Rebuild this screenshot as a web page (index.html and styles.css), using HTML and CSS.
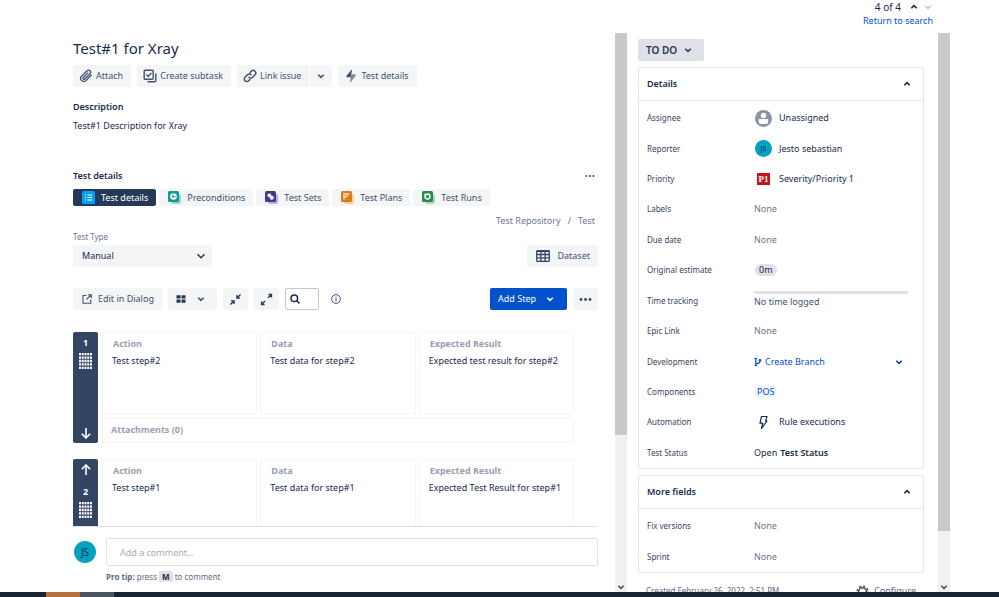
FILE: index.html
```html
<!DOCTYPE html>
<html lang="en">
<head>
  <meta charset="UTF-8">
  <title>Test#1 for Xray</title>
  <meta name="viewport" content="width=device-width, initial-scale=1.0"/>
  <link rel="stylesheet" href="styles.css">
</head>
<body>
  <!-- shared icons -->
  <svg class="sprite" width="0" height="0" aria-hidden="true">
    <symbol id="down" viewBox="0 0 10 10"><path d="M2.300 3.700L5 6.400l2.700-2.700" fill="none" stroke="currentColor" stroke-width="1.600"/></symbol>
    <symbol id="up" viewBox="0 0 10 10"><path d="M2.300 6.300L5 3.600l2.700 2.700" fill="none" stroke="currentColor" stroke-width="1.600"/></symbol>
    <symbol id="grip" viewBox="0 0 13 16">
      <path d="M0 1.200h13M0 4.600h13M0 8h13M0 11.400h13M0 14.800h13" stroke="#fff" stroke-width="2.300" stroke-dasharray="2 .75"/>
    </symbol>
    <symbol id="arrow" viewBox="0 0 12 12"><path d="M6 1v10M1.800 6.800L6 11l4.200-4.200" fill="none" stroke="#fff" stroke-width="1.600"/></symbol>
  </svg>

  <header class="pager">
    <div class="pager-row">
      <span>4 of 4</span>
      <button class="plain" aria-label="Previous"><svg class="ico10"><use href="#up"/></svg></button>
      <button class="plain faded" aria-label="Next" disabled><svg class="ico10"><use href="#down"/></svg></button>
    </div>
    <a href="#">Return to search</a>
  </header>

  <div class="layout">
    <main class="issue">
      <div class="issue-scroll">
        <h1>Test#1 for Xray</h1>
        <div class="actions">
          <button class="btn">
            <svg class="ico14" viewBox="0 0 14 14"><path d="M12.3 6.2L7 11.6a3.1 3.1 0 0 1-4.4-4.4l5.5-5.5a2.1 2.1 0 0 1 3 3L5.900 10a1.050 1.050 0 0 1-1.500-1.500L9 3.900" fill="none" stroke="#42526e" stroke-width="1.300" stroke-linecap="round"/></svg>
            Attach
          </button>
          <button class="btn">
            <svg class="ico14" viewBox="0 0 14 14" fill="none" stroke="#42526e" stroke-width="1.400"><rect x="1.200" y="1.200" width="9" height="9" rx="1"/><path d="M3.400 5.600l1.800 1.800 3.200-3.400M12.800 4.500v7a1.300 1.300 0 0 1-1.300 1.300H4.500"/></svg>
            Create subtask
          </button>
          <div class="split">
            <button class="btn">
              <svg class="ico14" viewBox="0 0 14 14" fill="none" stroke="#42526e" stroke-width="1.500" stroke-linecap="round"><path d="M6 8.200a2.500 2.500 0 0 0 3.600 0l2.400-2.400a2.500 2.500 0 0 0-3.600-3.600L7.200 3.400"/><path d="M8 5.800a2.500 2.500 0 0 0-3.600 0L2 8.200a2.500 2.500 0 0 0 3.600 3.600l1.200-1.200"/></svg>
              Link issue
            </button>
            <button class="btn btn-arrow" aria-label="More link options"><svg class="ico10"><use href="#down"/></svg></button>
          </div>
          <button class="btn">
            <svg class="ico14" viewBox="0 0 14 14"><path d="M8.200 0L2.500 6.800v1.400h4.200L8.200 0z" fill="#42526e"/><path d="M5.800 14l5.700-7V5.200H7.300L5.800 14z" fill="#7a869a"/></svg>
            Test details
          </button>
        </div>

        <h2>Description</h2>
        <p class="description">Test#1 Description for Xray</p>

        <div class="panel-head">
          <h2>Test details</h2>
          <button class="plain" aria-label="More"><svg class="ico10" viewBox="0 0 10 10" fill="#344563"><circle cx="1.500" cy="5" r="1"/><circle cx="5" cy="5" r="1"/><circle cx="8.500" cy="5" r="1"/></svg></button>
        </div>
        <nav class="tabs">
          <button class="tab tab-active">
            <svg class="ico13" viewBox="0 0 13 13"><rect width="13" height="13" rx="1.500" fill="#00a3f5"/><path d="M3 4h1M3 6.500h1M3 9h1M5.500 4h4.500M5.500 6.500h4.500M5.500 9h4.500" stroke="#fff"/></svg>
            Test details
          </button>
          <button class="tab">
            <svg class="ico13" viewBox="0 0 13 13"><rect x="3" y="3" width="10" height="10" rx="2" fill="#8fdbd3"/><rect width="11" height="11" rx="1.500" fill="#129a94"/><circle cx="5.500" cy="5.500" r="3.300" fill="#fff"/><path d="M5 3.200v2.500h2.700M3.700 5l1.500 2" fill="none" stroke="#129a94"/></svg>
            Preconditions
          </button>
          <button class="tab">
            <svg class="ico13" viewBox="0 0 13 13"><rect x="3" y="3" width="10" height="10" rx="2" fill="#b9b0e6"/><rect width="11" height="11" rx="1.500" fill="#48368f"/><circle cx="4.300" cy="4.300" r="1.900" fill="#fff"/><circle cx="6.800" cy="6.800" r="2" fill="#fff"/></svg>
            Test Sets
          </button>
          <button class="tab">
            <svg class="ico13" viewBox="0 0 13 13"><rect x="3" y="3" width="10" height="10" rx="2" fill="#ffcf91"/><rect width="11" height="11" rx="1.500" fill="#d97a1c"/><path d="M3 8.500V3h5.500M3 6l4-1" fill="none" stroke="#ffe3c2" stroke-width="1.300"/></svg>
            Test Plans
          </button>
          <button class="tab">
            <svg class="ico13" viewBox="0 0 13 13"><rect x="3" y="3" width="10" height="10" rx="2" fill="#a5dcb5"/><rect width="11" height="11" rx="1.500" fill="#2b8a4b"/><circle cx="5.500" cy="5.500" r="2.400" fill="none" stroke="#fff" stroke-width="1.500"/><path d="M2 3l2 1" stroke="#fff"/></svg>
            Test Runs
          </button>
        </nav>
        <div class="crumbs"><a href="#">Test Repository</a><span>/</span><a href="#">Test</a></div>

        <label class="type-label" for="test-type">Test Type</label>
        <div class="type-row">
          <div class="select-wrap">
            <select id="test-type"><option>Manual</option></select>
            <svg class="select-arrow" viewBox="0 0 10 10"><path d="M1.500 3.200L5 6.700l3.500-3.500" fill="none" stroke="#253858" stroke-width="1.500"/></svg>
          </div>
          <button class="btn btn-dataset">
            <svg class="ico14" viewBox="0 0 14 14" fill="none" stroke="#344563" stroke-width="1.300"><rect x=".7" y="1.700" width="12.600" height="10.600" rx=".8"/><path d="M.7 2.300h12.600M.7 5.500h12.600M.7 8.900h12.600M4.900 2v10M9.100 2v10"/></svg>
            Dataset
          </button>
        </div>

        <div class="toolbar">
          <button class="btn btn-dialog">
            <svg class="ico10" viewBox="0 0 10 10" fill="none" stroke="#42526e" stroke-width="1.100"><path d="M4.500 1.500H1v7.800h7.800V5.500M6 .7h3.300V4M9 1L4.500 5.500"/></svg>
            Edit in Dialog
          </button>
          <button class="btn btn-view" aria-label="View">
            <svg class="ico10" viewBox="0 0 10 10" fill="#253858"><path d="M.5 1.200h4v3.300h-4zM5.500 1.200h4v3.300h-4zM.5 5.500h4v3.300h-4zM5.500 5.500h4v3.300h-4z"/></svg>
            <svg class="ico10"><use href="#down"/></svg>
          </button>
          <button class="btn btn-square" aria-label="Collapse">
            <svg class="ico13" viewBox="0 0 13 13" fill="none" stroke="#253858" stroke-width="1.300"><path d="M11.500 1.500L8.300 4.700M7.900 2v3.100H11M1.500 11.500l3.200-3.200M2 7.900h3.100V11"/></svg>
          </button>
          <button class="btn btn-square" aria-label="Expand">
            <svg class="ico13" viewBox="0 0 13 13" fill="none" stroke="#253858" stroke-width="1.300"><path d="M8 5l3.300-3.300M8.400 1.500h3.100v3.100M5 8l-3.300 3.300M1.500 8.400v3.100h3.100"/></svg>
          </button>
          <div class="search">
            <svg class="ico10" viewBox="0 0 10 10" fill="none" stroke="#172b4d" stroke-width="1.500"><circle cx="4.300" cy="4.300" r="3.300"/><path d="M6.700 6.700l2.700 2.700"/></svg>
            <input type="text" aria-label="Search steps">
          </div>
          <svg class="ico10 info" viewBox="0 0 10 10" fill="none" stroke="#42526e"><circle cx="5" cy="5" r="4.400"/><path d="M5 4.400v3M5 2.400v1.100"/></svg>
          <button class="btn btn-primary">Add Step <svg class="ico10"><use href="#down"/></svg></button>
          <button class="btn btn-square" aria-label="More step actions">
            <svg class="ico13" viewBox="0 0 13 13" fill="#344563"><circle cx="2" cy="6.500" r="1.400"/><circle cx="6.500" cy="6.500" r="1.400"/><circle cx="11" cy="6.500" r="1.400"/></svg>
          </button>
        </div>

        <section class="step">
          <div class="step-bar">
            <span class="step-num">1</span>
            <svg class="grip"><use href="#grip"/></svg>
            <svg class="ico12 step-down"><use href="#arrow"/></svg>
          </div>
          <div class="step-body">
            <div class="cell"><h3>Action</h3><p>Test step#2</p></div>
            <div class="cell"><h3>Data</h3><p>Test data for step#2</p></div>
            <div class="cell"><h3>Expected Result</h3><p>Expected test result for step#2</p></div>
            <div class="attachments"><h3>Attachments (0)</h3></div>
          </div>
        </section>
        <section class="step">
          <div class="step-bar">
            <svg class="ico12 step-up"><use href="#arrow"/></svg>
            <span class="step-num">2</span>
            <svg class="grip"><use href="#grip"/></svg>
          </div>
          <div class="step-body">
            <div class="cell"><h3>Action</h3><p>Test step#1</p></div>
            <div class="cell"><h3>Data</h3><p>Test data for step#1</p></div>
            <div class="cell"><h3>Expected Result</h3><p>Expected Test Result for step#1</p></div>
            <div class="attachments"><h3>Attachments (0)</h3></div>
          </div>
        </section>
      </div>

      <div class="comment">
        <span class="avatar avatar-lg">JS</span>
        <div class="comment-main">
          <input type="text" placeholder="Add a comment..." aria-label="Add a comment">
          <p class="tip"><b>Pro tip:</b> press <kbd>M</kbd> to comment</p>
        </div>
      </div>
    </main>

    <div class="scrollbar scrollbar-main"><div class="thumb"></div><svg class="ico10"><use href="#down"/></svg></div>

    <aside class="side">
      <button class="status">TO DO <svg class="ico10"><use href="#down"/></svg></button>

      <section class="card">
        <button class="card-head">Details <svg class="ico10"><use href="#up"/></svg></button>
        <dl class="fields fields-details">
          <dt>Assignee</dt>
          <dd>
            <svg class="ico17" viewBox="0 0 17 17"><circle cx="8.500" cy="8.500" r="8.500" fill="#8993a4"/><circle cx="8.500" cy="5.500" r="2.700" fill="#fff"/><path d="M3.800 9h9.400v2.800a2.200 2.200 0 0 1-2.200 2.200H6a2.200 2.200 0 0 1-2.200-2.200z" fill="#fff"/></svg>
            Unassigned
          </dd>
          <dt>Reporter</dt>
          <dd><span class="avatar">JS</span> Jesto sebastian</dd>
          <dt>Priority</dt>
          <dd><span class="priority">P1</span> Severity/Priority 1</dd>
          <dt>Labels</dt>
          <dd class="none">None</dd>
          <dt>Due date</dt>
          <dd class="none">None</dd>
          <dt>Original estimate</dt>
          <dd><span class="estimate">0m</span></dd>
          <dt>Time tracking</dt>
          <dd class="tracking"><div class="track"></div>No time logged</dd>
          <dt>Epic Link</dt>
          <dd class="none">None</dd>
          <dt>Development</dt>
          <dd class="dev">
            <a href="#"><svg class="ico8" viewBox="0 0 8 10" fill="none" stroke="#0052cc" stroke-width="1.200"><path d="M1.800 1.500v7M.5 1.500h2.600M.5 8.500h2.600M1.800 6.700C4 6.700 6 6.300 6 4"/><circle cx="6" cy="3.300" r=".8"/></svg>Create Branch</a>
            <button class="plain" aria-label="Development options"><svg class="ico10"><use href="#down"/></svg></button>
          </dd>
          <dt>Components</dt>
          <dd><a class="tag" href="#">POS</a></dd>
          <dt>Automation</dt>
          <dd>
            <svg class="ico17" viewBox="0 0 17 17"><path d="M6.500 2.500h5.500L10.500 7H12L6.500 14.500l1.200-5.300H5z" fill="none" stroke="#172b4d" stroke-width="1.200" stroke-linejoin="round"/></svg>
            Rule executions
          </dd>
          <dt>Test Status</dt>
          <dd class="test-status">Open <b>Test Status</b></dd>
        </dl>
      </section>

      <section class="card">
        <button class="card-head">More fields <svg class="ico10"><use href="#up"/></svg></button>
        <dl class="fields fields-more">
          <dt>Fix versions</dt>
          <dd class="none">None</dd>
          <dt>Sprint</dt>
          <dd class="none">None</dd>
        </dl>
      </section>

      <footer class="side-foot">
        <span>Created February 26, 2022, 2:51 PM</span>
        <button class="plain configure">
          <svg class="ico13" viewBox="0 0 13 13" fill="none" stroke="#42526e"><circle cx="6.500" cy="6.500" r="3.800" stroke-width="1.500"/><circle cx="6.500" cy="6.500" r="5.300" stroke-width="1.600" stroke-dasharray="2.100 2.060"/></svg>
          Configure
        </button>
      </footer>
    </aside>

    <div class="scrollbar scrollbar-side"><div class="thumb"></div><svg class="ico10"><use href="#down"/></svg></div>
  </div>

  <div class="taskbar"><span class="task task-orange"></span><span class="task task-grey"></span></div>
</body>
</html>
```
FILE: styles.css
```css
* { box-sizing: border-box; }
body {
  margin: 0;
  height: 100vh;
  display: flex;
  flex-direction: column;
  overflow: hidden;
  background: #fff;
  color: #172b4d;
  font-family: 'Segoe UI', 'Noto Sans', 'Open Sans', sans-serif;
  font-size: 9px;
  line-height: 16px;
}
h1, h2, h3, p, dl, dd { margin: 0; }
button, input, select { font: inherit; color: inherit; }
a { color: #0052cc; text-decoration: none; }
a:hover { text-decoration: underline; }
svg { flex: none; }
.sprite { position: absolute; }
.ico8 { width: 8px; height: 10px; }
.ico10 { width: 10px; height: 10px; }
.ico12 { width: 12px; height: 12px; }
.ico13 { width: 13px; height: 13px; }
.ico14 { width: 14px; height: 14px; }
.ico17 { width: 17px; height: 17px; }

/* Pager */
.pager {
  height: 33px;
  padding-right: 66px;
  display: flex;
  flex-direction: column;
  align-items: flex-end;
  line-height: 14px;
}
.pager-row { display: flex; align-items: center; gap: 4px; font-size: 10px; }
.pager-row span { margin-right: 4px; }
.plain {
  display: flex;
  align-items: center;
  border: 0;
  padding: 0;
  background: none;
  cursor: pointer;
}
.faded { color: #c1c7d0; }

.layout {
  flex: 1;
  min-height: 0;
  display: flex;
  padding: 0 49px 0 73px;
}

/* Issue column */
.issue {
  flex: 1;
  min-width: 0;
  display: flex;
  flex-direction: column;
  padding-right: 17px;
}
.issue-scroll {
  flex: 1;
  min-height: 0;
  overflow: hidden;
  padding-top: 4px;
  border-bottom: 1px solid #dfe1e6;
}
h1 { font-size: 15px; line-height: 22px; font-weight: 400; }
h2 { font-size: 9px; line-height: 16px; font-weight: 600; }
.actions { display: flex; gap: 6px; margin: 6px 0 12px; }
.btn {
  display: flex;
  align-items: center;
  gap: 3px;
  height: 22px;
  padding: 0 8px 0 6px;
  border: 0;
  border-radius: 2px;
  background: #f4f5f7;
  color: #42526e;
  white-space: nowrap;
  cursor: pointer;
}
.split { display: flex; gap: 1px; }
.btn-arrow { padding: 0 6px; }
.description { margin-top: 3px; }
.panel-head {
  display: flex;
  justify-content: space-between;
  margin-top: 34px;
  padding-right: 3px;
}

.tabs { display: flex; gap: 3px; margin-top: 5px; }
.tab {
  display: flex;
  align-items: center;
  gap: 6px;
  height: 17px;
  padding: 0 8px 0 9px;
  border: 0;
  border-radius: 2px;
  background: #f4f5f7;
  color: #42526e;
  white-space: nowrap;
}
.tab-active { background: #253858; color: #fff; }
.crumbs {
  display: flex;
  justify-content: flex-end;
  gap: 7px;
  margin-top: 7px;
  padding-right: 3px;
  color: #6b778c;
}
.crumbs a { color: #6b778c; }

.type-label { display: block; font-size: 8px; color: #6b778c; }
.type-row { display: flex; justify-content: space-between; }
.select-wrap { position: relative; width: 139px; }
.select-wrap select {
  appearance: none;
  width: 100%;
  height: 22px;
  padding: 0 9px;
  border: 0;
  border-radius: 2px;
  background: #f4f5f7;
}
.select-arrow {
  position: absolute;
  right: 6px;
  top: 6px;
  width: 10px;
  height: 10px;
  pointer-events: none;
}
.btn-dataset { padding: 0 8px 0 9px; gap: 7px; }

.toolbar { display: flex; gap: 6px; margin: 21px 0 22px; }
.btn-dialog { padding: 0 8px 0 9px; gap: 6px; }
.btn-view { padding: 0 11px 0 8px; gap: 10px; width: 49px; }
.btn-square { width: 25px; padding: 0; justify-content: center; }
.search {
  display: flex;
  align-items: center;
  width: 34px;
  padding-left: 4px;
  border: 1px solid #c1c7d0;
  border-radius: 2px;
}
.search input {
  flex: 1;
  min-width: 0;
  border: 0;
  padding: 0 2px;
  background: none;
  outline: none;
}
.info { margin: 6px auto 0 6px; }
.btn-primary { background: #0052cc; color: #fff; gap: 9px; padding: 0 12px 0 8px; }

/* Test steps */
.step { display: flex; gap: 4px; margin-bottom: 16px; padding-right: 24px; }
.step-bar {
  flex: none;
  width: 25px;
  display: flex;
  flex-direction: column;
  align-items: center;
  padding: 4px 0;
  border-radius: 2px;
  background: #344563;
}
.step-num { color: #fff; font-weight: 700; line-height: 14px; }
.grip { width: 13px; height: 16px; margin-top: 3px; }
.step-down { margin-top: auto; }
.step-up { transform: rotate(180deg); margin: 1px 0 9px; }
.step-body {
  flex: 1;
  display: grid;
  grid-template-columns: repeat(3, minmax(0, 1fr));
  gap: 4px 3px;
}
.cell, .attachments { border: 1px solid #f4f5f7; border-radius: 2px; }
.cell { min-height: 82px; padding: 3px 9px; }
.cell h3 { padding-left: 1px; }
.cell p { margin-top: 1px; white-space: nowrap; }
h3 { font-size: 9px; line-height: 16px; font-weight: 700; color: #97a0af; }
.attachments { grid-column: 1 / -1; padding: 3px 8px 4px; }

/* Comment box */
.comment { display: flex; gap: 10px; padding: 11px 0 7px 1px; }
.avatar {
  flex: none;
  display: flex;
  align-items: center;
  justify-content: center;
  width: 17px;
  height: 17px;
  border-radius: 50%;
  background: #00a3bf;
  color: #172b4d;
  font-size: 7px;
}
.avatar-lg { width: 22px; height: 22px; margin-top: 3px; font-size: 10px; }
.comment-main { flex: 1; }
.comment-main input {
  display: block;
  width: 100%;
  height: 28px;
  padding: 0 13px;
  border: 1px solid #dfe1e6;
  border-radius: 2px;
}
.comment-main input::placeholder { color: #a5adba; opacity: 1; }
.tip { margin-top: 3px; font-size: 8px; color: #5e6c84; }
.tip kbd {
  padding: 0 3px;
  border-radius: 2px;
  background: #dfe1e6;
  color: #172b4d;
  font: inherit;
  font-weight: 700;
}

/* Scrollbars */
.scrollbar {
  flex: none;
  width: 12px;
  display: flex;
  flex-direction: column;
  align-items: center;
  justify-content: space-between;
  background: #f1f1f1;
  color: #505050;
}
.thumb { width: 100%; background: #c9c9c9; }
.scrollbar-main .thumb { height: 72%; }
.scrollbar-side .thumb { height: 89%; }

/* Side panel */
.side {
  flex: none;
  width: 311px;
  padding: 6px 14px 0 11px;
  overflow: hidden;
}
.status {
  display: flex;
  align-items: center;
  gap: 6px;
  height: 22px;
  padding: 0 11px 0 8px;
  border: 0;
  border-radius: 2px;
  background: #dfe1e6;
  color: #253858;
  font-size: 10px;
  font-weight: 600;
}
.card { margin-top: 6px; border: 1px solid #e3e5e9; border-radius: 3px; }
.card-head {
  display: flex;
  align-items: center;
  justify-content: space-between;
  width: 100%;
  height: 33px;
  padding: 0 11px 0 8px;
  border: 0;
  border-bottom: 1px solid #e3e5e9;
  background: none;
  font-weight: 600;
}
.fields {
  display: grid;
  grid-template-columns: 107px 1fr;
  grid-auto-rows: 1fr;
  align-items: center;
  padding: 2px 15px 0 8px;
}
.fields-details { min-height: 367px; }
.fields-more { min-height: 63px; }
.fields dt { font-size: 8px; font-weight: 400; color: #344563; }
.fields dd { display: flex; align-items: center; gap: 7px; padding-left: 1px; }
.fields .none { padding: 0; color: #6b778c; }
.priority {
  width: 13px;
  height: 12px;
  margin: 0 2px;
  background: #c9131b;
  color: #fff;
  font: bold 9px/12px 'Liberation Serif', serif;
  text-align: center;
}
.estimate {
  padding: 0 4px;
  border-radius: 6px;
  background: #dfe1e6;
  line-height: 12px;
}
.fields .tracking { display: block; padding: 0; color: #42526e; }
.track { height: 3px; border-radius: 1px; background: #dfe1e6; }
.fields .dev { justify-content: space-between; padding: 0 4px 0 0; color: #0747a6; }
.dev a { display: flex; align-items: center; gap: 3px; }
.dev .plain { color: #0747a6; }
.tag { padding: 0 2px; border-radius: 2px; background: #f0f5ff; line-height: 13px; }
.fields .test-status { gap: 3px; padding: 0; }
.test-status b { font-weight: 600; }
.side-foot {
  display: flex;
  justify-content: space-between;
  padding: 10px 8px 0;
  font-size: 8px;
  color: #5e6c84;
}
.configure { gap: 5px; font-size: 9px; }

/* Taskbar strip */
.taskbar { flex: none; display: flex; height: 5px; padding-left: 46px; background: #1b2433; }
.task { width: 34px; }
.task-orange { background: #b5713a; }
.task-grey { background: #4b555f; }
```
